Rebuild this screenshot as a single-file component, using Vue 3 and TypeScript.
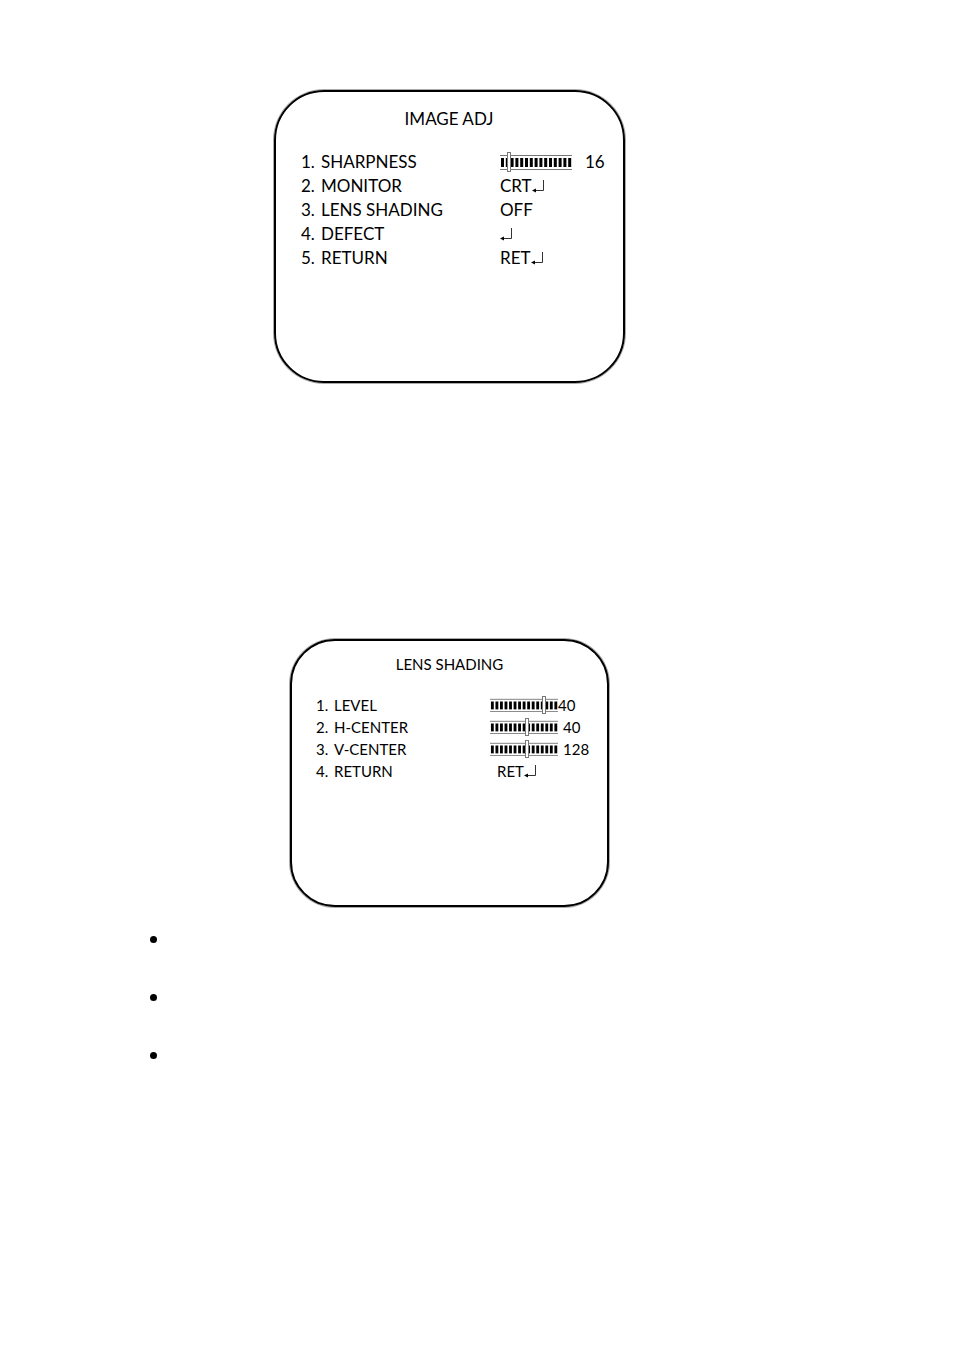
<script setup lang="ts">
import { reactive } from 'vue'

interface MenuRow {
  id: string
  label: string
  kind: 'slider' | 'action' | 'text'
  text?: string
  value?: number
  position?: number
  shape?: 'wide' | 'flush' | 'inset'
}

interface Menu {
  id: string
  title: string
  rows: MenuRow[]
}

const menus = reactive<Menu[]>([
  {
    id: 'image',
    title: 'IMAGE ADJ',
    rows: [
      { id: 'sharpness', label: 'SHARPNESS', kind: 'slider', value: 16, position: 10, shape: 'wide' },
      { id: 'monitor', label: 'MONITOR', kind: 'action', text: 'CRT' },
      { id: 'shading', label: 'LENS SHADING', kind: 'text', text: 'OFF' },
      { id: 'defect', label: 'DEFECT', kind: 'action', text: '' },
      { id: 'image-return', label: 'RETURN', kind: 'action', text: 'RET' },
    ],
  },
  {
    id: 'lens',
    title: 'LENS SHADING',
    rows: [
      { id: 'level', label: 'LEVEL', kind: 'slider', value: 40, position: 81, shape: 'flush' },
      { id: 'h-center', label: 'H-CENTER', kind: 'slider', value: 40, position: 54, shape: 'inset' },
      { id: 'v-center', label: 'V-CENTER', kind: 'slider', value: 128, position: 54, shape: 'inset' },
      { id: 'lens-return', label: 'RETURN', kind: 'action', text: 'RET' },
    ],
  },
])

const notes = [1, 2, 3]
const bars = Array.from({ length: 15 }, (_, i) => i)
</script>

<template>
  <main class="page">
    <section v-for="menu in menus" :key="menu.id" class="screen" :class="menu.id">
      <h2 class="title">{{ menu.title }}</h2>
      <ul class="rows">
        <li v-for="(row, index) in menu.rows" :key="row.id" class="row">
          <span>{{ index + 1 }}.</span>
          <label v-if="row.kind === 'slider'" :for="row.id">{{ row.label }}</label>
          <span v-else :id="row.id">{{ row.label }}</span>

          <div v-if="row.kind === 'slider'" class="setting" :class="row.shape">
            <div class="gauge">
              <svg class="track" viewBox="0 0 72 16" preserveAspectRatio="none" aria-hidden="true">
                <path d="M0 1.5H72M0 15.5H72" stroke="#777" stroke-width="1" />
                <rect v-for="bar in bars" :key="bar" :x="1 + bar * 4.8" y="4" width="3" height="9" />
              </svg>
              <input :id="row.id" v-model.number="row.position" class="range" type="range" min="0" max="100" />
            </div>
            <output :for="row.id">{{ row.value }}</output>
          </div>
          <button v-else-if="row.kind === 'action'" type="button" class="action" :aria-labelledby="row.id">
            <span v-if="row.text">{{ row.text }}</span>
            <svg class="enter" viewBox="0 0 13 14" aria-hidden="true">
              <path d="M11.5 1V11.5H2" fill="none" stroke="#333" stroke-width="1" />
              <path d="M0 11.5L4 9.5V13.5Z" />
            </svg>
          </button>
          <span v-else>{{ row.text }}</span>
        </li>
      </ul>
    </section>

    <ul class="notes">
      <li v-for="note in notes" :key="note"></li>
    </ul>
  </main>
</template>

<style>
body {
  margin: 0;
  background: #fff;
}
</style>

<style scoped>
.page {
  box-sizing: border-box;
  min-height: 100vh;
  padding: 90px 55px 40px 0;
  color: #000;
  font-family: Lato, "Liberation Sans", sans-serif;
}

.screen {
  box-sizing: border-box;
  width: 100%;
  margin: 0 auto;
  border: 2px solid #000;
  box-shadow: 0 0 0 1px #aaa;
}

.image {
  max-width: 351px;
  min-height: 293px;
  padding: 15px 10px 16px 25px;
  border-radius: 50px;
  font-size: 17px;
  line-height: 24px;
}

.lens {
  max-width: 319px;
  min-height: 268px;
  margin-top: 256px;
  padding: 12px 8px 16px 24px;
  border-radius: 45px;
  font-size: 15px;
  line-height: 22px;
}

.title {
  margin: 0;
  padding-right: 16px;
  font-size: inherit;
  font-weight: 400;
  text-align: center;
}

.rows {
  margin: 19px 0 0;
  padding: 0;
  list-style: none;
}

.row {
  display: grid;
  grid-template-columns: 20px 179px 1fr;
  white-space: nowrap;
}

.lens .row {
  grid-template-columns: 18px 156px 1fr;
}

.setting {
  display: flex;
  align-items: center;
  gap: 13px;
}

.gauge {
  position: relative;
  width: 72px;
  height: 16px;
}

.lens .gauge {
  width: 68px;
  height: 14px;
}

.flush {
  gap: 0;
}

.inset {
  gap: 5px;
}

.track {
  display: block;
  width: 100%;
  height: 100%;
}

.range {
  position: absolute;
  inset: -3px 0;
  width: 100%;
  margin: 0;
  appearance: none;
  background: transparent;
}

.range::-webkit-slider-thumb {
  box-sizing: border-box;
  width: 4px;
  height: 20px;
  appearance: none;
  border: 1px solid #777;
  background: #fff;
}

.lens .range::-webkit-slider-thumb {
  height: 18px;
}

.action {
  display: flex;
  align-items: center;
  justify-self: start;
  padding: 0;
  border: 0;
  background: none;
  color: inherit;
  font: inherit;
}

.lens .action {
  padding-left: 7px;
}

.enter {
  width: 13px;
  height: 14px;
}

.notes {
  margin: 29px 0 0 150px;
  padding: 0;
  list-style: none;
}

.notes li {
  height: 58px;
}

.notes li::before {
  display: block;
  width: 7px;
  height: 7px;
  border-radius: 50%;
  background: #000;
  content: "";
}
</style>
